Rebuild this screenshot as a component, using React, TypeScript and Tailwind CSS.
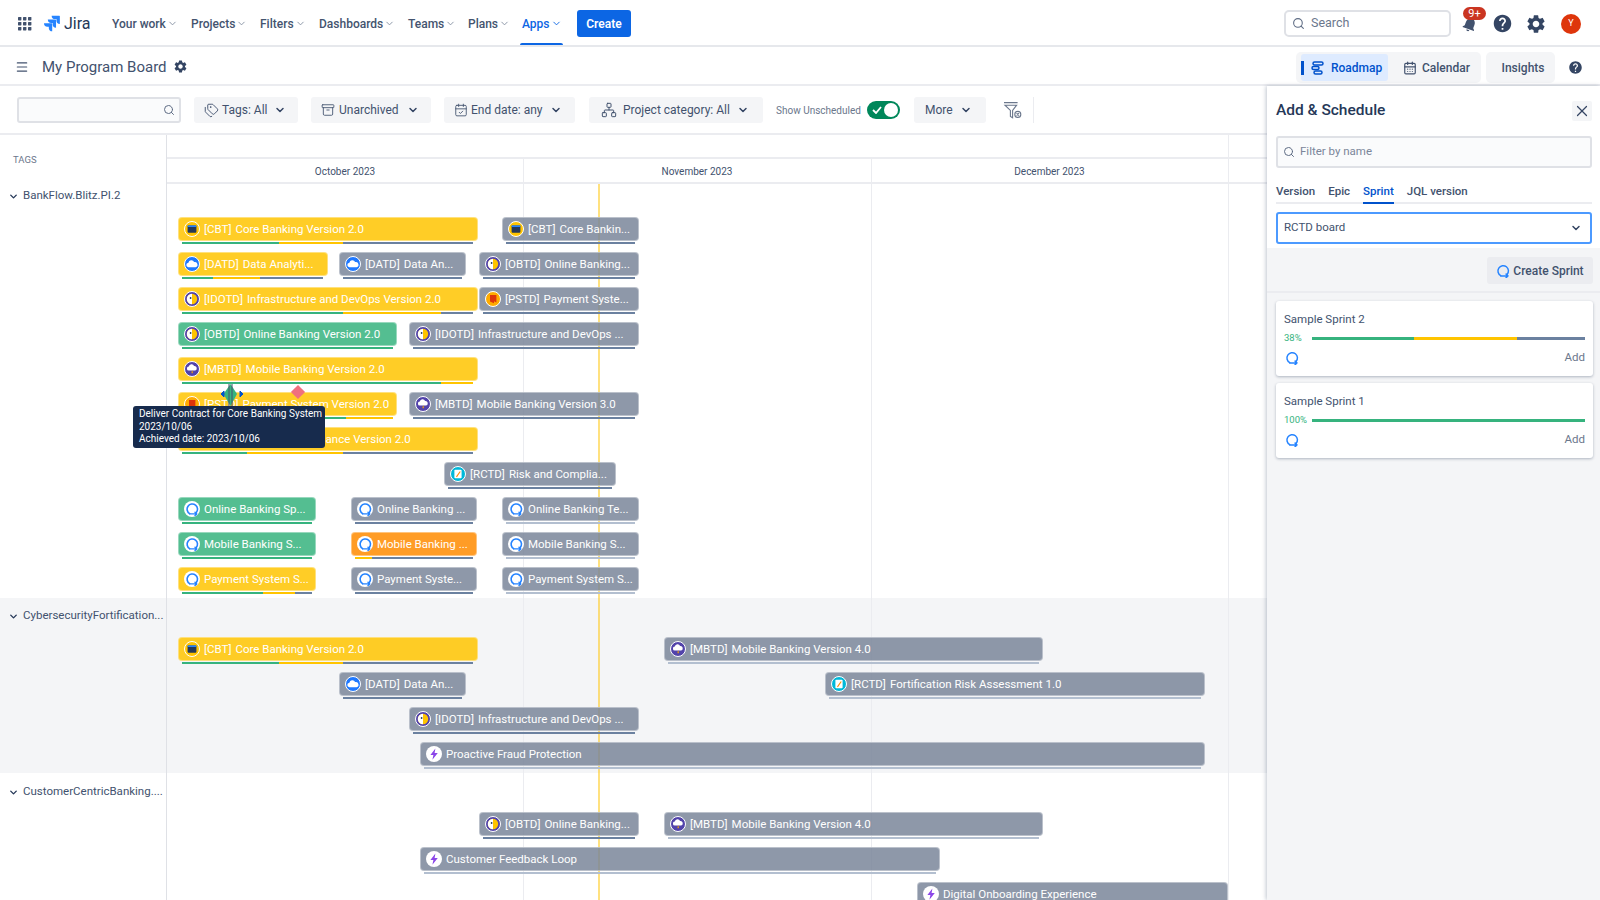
import React from "react";
import { ChevronDown, Search, Menu, Tags, Archive, CalendarCheck, Network, X, CalendarDays } from "lucide-react";
import { MdSettings, MdHelp, MdNotifications } from "react-icons/md";

const Y = "#ffc400", G = "#36b37e", D = "#6b81a0", L = "#b3bfd0";
type Seg = [string, number];
type BarT = { x: number; e: number; c: string; i: string; t: string; p: Seg[] };
const yc = "bg-[#ffc400]/85", gc = "bg-[#36b37e]/85", gy = "bg-[#7a869a]/85", oc = "bg-[#ff8b00]/85";

const b = (x: number, e: number, c: string, i: string, t: string, p: Seg[] = [[D, e - 4]]): BarT => ({ x, e, c, i, t, p });
const light = (e: number): Seg[] => [[L, e - 4]];

const cbtYellow = b(178, 478, yc, "cbt", "[CBT] \u200aCore Banking Version 2.0", [[G, 279], [Y, 343], [D, 473]]);
const dataGray = b(339, 466, gy, "dat", "[DATD] \u200aData An...");
const infraGray = b(409, 639, gy, "ido", "[IDOTD] \u200aInfrastructure and DevOps ...");
const onlineGray = b(479, 639, gy, "ido", "[OBTD] \u200aOnline Banking...");
const mob4 = b(664, 1043, gy, "mob", "[MBTD] \u200aMobile Banking Version 4.0", light(1043));

const groups: { label: string; top: string; labelTop: string; bg: string; h: string; rows: BarT[][] }[] = [
  {
    label: "BankFlow.Blitz.PI.2", top: "pt-[33px]", labelTop: "pt-[3px]", bg: "", h: "h-[414px]",
    rows: [
      [cbtYellow, b(502, 639, gy, "cbt", "[CBT] \u200aCore Bankin...")],
      [b(178, 328, yc, "dat", "[DATD] \u200aData Analyti...", [[G, 213], [Y, 260], [D, 323]]), dataGray, onlineGray],
      [b(178, 478, yc, "ido", "[IDOTD] \u200aInfrastructure and DevOps Version 2.0", [[G, 343], [Y, 441], [D, 473]]), b(479, 639, gy, "pst", "[PSTD] \u200aPayment Syste...")],
      [b(178, 397, gc, "ido", "[OBTD] \u200aOnline Banking Version 2.0", [[G, 393]]), infraGray],
      [b(178, 478, yc, "mob", "[MBTD] \u200aMobile Banking Version 2.0", [[G, 441], [Y, 473]])],
      [b(178, 397, yc, "pst", "[PSTD] \u200aPayment System Version 2.0", [[G, 346], [Y, 393]]), b(409, 639, gy, "mob", "[MBTD] \u200aMobile Banking Version 3.0")],
      [b(178, 478, yc, "rct", "[RCTD] \u200aRisk and Compliance Version 2.0", [[G, 247], [Y, 343], [D, 473]])],
      [b(444, 616, gy, "rct", "[RCTD] \u200aRisk and Complia...")],
      [b(178, 316, gc, "spr", "Online Banking Sp...", [[G, 312]]), b(351, 477, gy, "spr", "Online Banking ..."), b(502, 639, gy, "spr", "Online Banking Te...", light(639))],
      [b(178, 316, gc, "spr", "Mobile Banking S...", [[G, 312]]), b(351, 477, oc, "spr", "Mobile Banking ...", [[Y, 372], [D, 473]]), b(502, 639, gy, "spr", "Mobile Banking S...", light(639))],
      [b(178, 316, yc, "spr", "Payment System S...", [[G, 263], [Y, 295], [D, 312]]), b(351, 477, gy, "spr", "Payment Syste..."), b(502, 639, gy, "spr", "Payment System S...", light(639))],
    ],
  },
  {
    label: "CybersecurityFortification...", top: "pt-[39px]", labelTop: "pt-[9px]", bg: "bg-[#f4f5f7]", h: "h-[175px]",
    rows: [
      [cbtYellow, mob4],
      [dataGray, b(825, 1205, gy, "rct", "[RCTD] \u200aFortification Risk Assessment 1.0", light(1205))],
      [infraGray],
      [b(420, 1205, gy, "epc", "Proactive Fraud Protection", light(1205))],
    ],
  },
  {
    label: "CustomerCentricBanking....", top: "pt-[39px]", labelTop: "pt-[10px]", bg: "", h: "h-[127px]",
    rows: [
      [onlineGray, mob4],
      [b(420, 940, gy, "epc", "Customer Feedback Loop", light(940))],
      [b(917, 1228, gy, "epc", "Digital Onboarding Experience", light(1228))],
    ],
  },
];

function SprintGlyph({ s = 14 }: { s?: number }) {
  return (
    <svg width={s} height={s} viewBox="0 0 16 16" fill="none" stroke="#2684ff" strokeWidth="1.7" strokeLinecap="round" strokeLinejoin="round">
      <path d="M5.4 13.2A6 6 0 1 1 12.6 12" />
      <path d="M5.4 13.6H13.4M11.6 11.6l2 2-2 2" />
    </svg>
  );
}

function BarIcon({ k }: { k: string }) {
  const cl = "shrink-0";
  if (k === "spr")
    return (
      <svg className={cl} width="16" height="16" viewBox="0 0 16 16" fill="none">
        <circle cx="8" cy="8" r="8" fill="#fff" />
        <path d="M5.6 12.6A5.2 5.2 0 1 1 12.2 11.6" stroke="#2684ff" strokeWidth="1.6" strokeLinecap="round" />
        <path d="M5.6 12.9H12.6M11 11.2l1.8 1.7-1.8 1.6" stroke="#2684ff" strokeWidth="1.4" strokeLinecap="round" strokeLinejoin="round" />
      </svg>
    );
  if (k === "epc")
    return (
      <svg className={cl} width="16" height="16" viewBox="0 0 16 16">
        <circle cx="8" cy="8" r="8" fill="#fff" />
        <path d="M9.4 2.4 4.4 9h3l-1 4.8L11.8 7H8.6z" fill="#8b46e8" />
      </svg>
    );
  if (k === "cbt")
    return (
      <svg className={cl} width="16" height="16" viewBox="0 0 16 16">
        <circle cx="8" cy="8" r="7.5" fill="#ffc400" stroke="#fff" />
        <rect x="3.6" y="4.4" width="8.8" height="7.4" rx="1" fill="#253858" />
        <rect x="3.6" y="4.4" width="8.8" height="1.6" fill="#2684ff" />
      </svg>
    );
  if (k === "dat")
    return (
      <svg className={cl} width="16" height="16" viewBox="0 0 16 16">
        <circle cx="8" cy="8" r="7.5" fill="#1f78ff" stroke="#fff" />
        <path d="M4.6 11.2a2.2 2.2 0 0 1-.2-4.4 3 3 0 0 1 5.7-.7 2.6 2.6 0 0 1 1.5 5.1z" fill="#fff" />
      </svg>
    );
  if (k === "ido")
    return (
      <svg className={cl} width="16" height="16" viewBox="0 0 16 16">
        <circle cx="8" cy="8" r="7.5" fill="#5243aa" stroke="#fff" />
        <circle cx="8" cy="8" r="5.2" fill="#ffc400" />
        <path d="M8 2.800a5.200 5.200 0 0 0 0 10.400z" fill="#fff" />
        <circle cx="6.6" cy="7" r="0.9" fill="#253858" />
      </svg>
    );
  if (k === "mob")
    return (
      <svg className={cl} width="16" height="16" viewBox="0 0 16 16">
        <circle cx="8" cy="8" r="7.5" fill="#5243aa" stroke="#fff" />
        <path d="M5 9.6a2 2 0 0 1-.2-4 2.8 2.8 0 0 1 5.3-.6 2.4 2.4 0 0 1 1.2 4.6z" fill="#fff" />
        <path d="M8.4 9.4 7 11.6h1.2l-.6 1.6 1.8-2.4H8.2l.6-1.4z" fill="#ffab00" />
      </svg>
    );
  if (k === "pst")
    return (
      <svg className={cl} width="16" height="16" viewBox="0 0 16 16">
        <circle cx="8" cy="8" r="7.5" fill="#ffab00" stroke="#fff" />
        <path d="M5 4h6.4v7.6L9 10.2v2L5 10.4z" fill="#de350b" />
      </svg>
    );
  return (
    <svg className={cl} width="16" height="16" viewBox="0 0 16 16">
      <circle cx="8" cy="8" r="7.500" fill="#00b8d9" stroke="#fff" />
      <rect x="4.4" y="3.8" width="7.2" height="8.4" rx="0.8" fill="#fff" />
      <path d="M6 10.6 9.8 5.2l.9.6-3.8 5.4z" fill="#ff8b00" />
    </svg>
  );
}

function Bar({ d }: { d: BarT }) {
  const left = d.x - 167;
  const width = d.e - d.x;
  let prev = d.x + 4;
  return (
    <div className="absolute top-0 z-20" style={{ left, width }}>
      <div className={`h-[24px] rounded-[4px] flex items-center pl-[5px] gap-[4px] overflow-hidden border border-white/40 ${d.c}`}>
        <BarIcon k={d.i} />
        <span className="text-white text-[11.5px] whitespace-pre leading-none pt-[1px]">{d.t}</span>
      </div>
      <div className="flex h-[2px] mt-[1px] mx-[4px]">
        {d.p.map(([c, e], i) => {
          const w = e - prev;
          prev = e;
          return <div key={i} style={{ width: w, background: c }} />;
        })}
      </div>
    </div>
  );
}

function NavItem({ t, active, w }: { t: string; active?: boolean; w: string }) {
  return (
    <div className={`relative h-full flex items-center ${w} text-[12px] font-medium ${active ? "text-[#0c66e4]" : "text-[#44546f]"}`}>
      <span>{t}</span>
      <ChevronDown size={11} strokeWidth={2} className={`ml-[1px] ${active ? "text-[#0c66e4]" : "text-[#8590a2]"}`} />
      {active && <div className="absolute left-[-2px] right-[14px] bottom-0 h-[2px] bg-[#0c66e4] rounded-t" />}
    </div>
  );
}

function FilterBtn({ w, gap, pl, tl, icon, t }: { w: string; gap: string; pl: string; tl: string; icon: React.ReactNode; t: string }) {
  return (
    <div className={`h-[26px] ${w} ${pl} rounded-[3px] bg-[#f4f5f7] flex items-center text-[12px] text-[#42526e] shrink-0`}>
      {icon}
      <span className={`${tl} whitespace-nowrap`}>{t}</span>
      <ChevronDown size={12} strokeWidth={3} className={`${gap} text-[#344563]`} />
    </div>
  );
}

function SprintCard({ name, pct, segs }: { name: string; pct: string; segs: React.ReactNode }) {
  return (
    <div className="h-[75px] ml-[9px] mr-[7px] bg-white rounded-[3px] shadow-[0_1px_3px_rgba(9,30,66,0.3)] px-[8px] pt-[9px]">
      <div className="text-[11.5px] leading-[18px] text-[#42526e]">{name}</div>
      <div className="flex items-center mt-[4px] h-[12px]">
        <span className="w-[28px] text-[9.5px] text-[#36b37e] leading-none">{pct}</span>
        <div className="flex flex-1 h-[3px]">{segs}</div>
      </div>
      <div className="flex items-center justify-between mt-[5px] pl-[1px]">
        <SprintGlyph s={14} />
        <span className="text-[11.5px] text-[#6b778c]">Add</span>
      </div>
    </div>
  );
}

export default function App() {
  return (
    <div className="w-[1600px] h-[900px] overflow-hidden bg-white flex flex-col font-['Roboto',sans-serif] text-[#42526e]">
      {/* top nav */}
      <div className="h-[47px] shrink-0 flex items-center border-b-[2px] border-[#e6e8ec] pl-[18px] pr-[19px] pt-[2px]">
        <svg width="14" height="14" viewBox="0 0 14 14" fill="#42526e" className="shrink-0">
          {[0, 5, 10].map((x) => [0, 5, 10].map((y) => <rect key={`${x}${y}`} x={x} y={y} width="3.4" height="3.4" rx="0.6" />))}
        </svg>
        <svg width="17" height="17" viewBox="0 0 24 24" className="ml-[11px] shrink-0" fill="#2684ff">
          <path d="M23 1H12.2a4.8 4.8 0 0 0 4.8 4.8h2V7.8a4.8 4.8 0 0 0 4.8 4.8V1.8A.8.8 0 0 0 23 1z" />
          <path d="M17.6 6.4H6.8a4.8 4.8 0 0 0 4.8 4.8h2v2a4.8 4.800 0 0 0 4.8 4.8V7.2a.8.8 0 0 0-.8-.8z" />
          <path d="M12.2 11.8H1.4a4.8 4.8 0 0 0 4.8 4.8h2v2a4.8 4.8 0 0 0 4.8 4.4V12.6a.8.8 0 0 0-.8-.8z" />
        </svg>
        <span className="ml-[4px] w-[45px] text-[16px] text-[#253858] leading-none">Jira</span>
        <div className="flex h-full items-center ml-[3px]">
          <NavItem t="Your work" w="w-[79px]" />
          <NavItem t="Projects" w="w-[69px]" />
          <NavItem t="Filters" w="w-[59px]" />
          <NavItem t="Dashboards" w="w-[89px]" />
          <NavItem t="Teams" w="w-[60px]" />
          <NavItem t="Plans" w="w-[54px]" />
          <NavItem t="Apps" active w="w-[55px]" />
        </div>
        <div className="h-[27px] w-[54px] rounded-[3px] bg-[#0c66e4] text-white text-[12px] font-semibold flex items-center justify-center">Create</div>
        <div className="flex-1" />
        <div className="h-[27px] w-[167px] rounded-[5px] border-[2px] border-[#dfe1e6] flex items-center pl-[6px] text-[12.500px] text-[#6b778c]">
          <Search size={13} strokeWidth={2} className="text-[#5e6c84]" />
          <span className="ml-[6px]">Search</span>
        </div>
        <div className="relative ml-[7px] w-[24px] h-[24px] flex items-center justify-center">
          <MdNotifications size={18} className="text-[#42526e] rotate-[20deg]" />
          <div className="absolute top-[-5px] left-[5px] h-[13px] w-[23px] rounded-full bg-[#ca3521] text-white text-[11px] leading-[13px] text-center">9+</div>
        </div>
        <MdHelp size={21} className="ml-[10px] text-[#344563]" />
        <MdSettings size={22} className="ml-[12px] text-[#344563]" />
        <div className="ml-[14px] w-[20px] h-[20px] rounded-full bg-[#de350b] text-white text-[9px] flex items-center justify-center">Y</div>
      </div>

      {/* sub bar */}
      <div className="h-[39px] shrink-0 flex items-center border-b-[2px] border-[#ebecf0] pl-[15px] pt-[2px]">
        <Menu size={14} strokeWidth={2} className="text-[#42526e]" />
        <span className="ml-[13px] pt-[1px] text-[15px] text-[#42526e]">My Program Board</span>
        <MdSettings size={15} className="ml-[6px] text-[#344563]" />
        <div className="flex-1" />
        <div className="mt-[2px] h-[31px] w-[185px] rounded-[5px] bg-[#f4f5f7] flex items-center pl-[5px]">
          <div className="h-[27px] w-[87px] rounded-[3px] bg-[#deebff] flex items-center text-[12px] font-medium text-[#0052cc]">
            <div className="h-[14px] w-[3px] bg-[#0052cc]" />
            <svg width="14" height="14" viewBox="0 0 14 14" fill="none" stroke="#0052cc" strokeWidth="1.5" className="ml-[7px]">
              <rect x="2" y="1" width="10" height="3" rx="1.5" />
              <rect x="1" y="5.5" width="7" height="3" rx="1.5" />
              <rect x="3" y="10" width="8" height="3" rx="1.5" />
            </svg>
            <span className="ml-[6px]">Roadmap</span>
          </div>
          <CalendarDays size={14} strokeWidth={2} className="ml-[15px] text-[#42526e]" />
          <span className="ml-[5px] text-[12px] font-medium text-[#42526e]">Calendar</span>
        </div>
        <div className="mt-[2px] ml-[5px] h-[31px] w-[69px] rounded-[5px] bg-[#f4f5f7] flex items-center justify-center pl-[5px] text-[12px] font-medium text-[#42526e]">Insights</div>
        <MdHelp size={15} className="mt-[2px] ml-[13px] mr-[17px] text-[#344563]" />
      </div>

      {/* main */}
      <div className="flex-1 flex min-h-0">
        <div className="w-[1267px] shrink-0 flex flex-col min-h-0">
          {/* filters */}
          <div className="h-[49px] shrink-0 border-b-[2px] border-[#ebecf0] flex items-center pl-[17px] pt-[1px]">
            <div className="w-[164px] h-[26px] shrink-0 rounded-[3px] border-[2px] border-[#dfe1e6] bg-[#fafbfc] flex items-center justify-end pr-[4px]">
              <Search size={12} strokeWidth={2} className="text-[#5e6c84]" />
            </div>
            <div className="w-[13px] shrink-0" />
            <FilterBtn w="w-[104px]" pl="pl-[10px]" tl="ml-[3px]" gap="ml-[6px]" icon={<Tags size={15} strokeWidth={1.5} />} t="Tags: All" />
            <div className="w-[13px] shrink-0" />
            <FilterBtn w="w-[120px]" pl="pl-[10px]" tl="ml-[4px]" gap="ml-[8px]" icon={<Archive size={14} strokeWidth={1.5} />} t="Unarchived" />
            <div className="w-[13px] shrink-0" />
            <FilterBtn w="w-[131px]" pl="pl-[10px]" tl="ml-[3px]" gap="ml-[7px]" icon={<CalendarCheck size={14} strokeWidth={1.5} />} t="End date: any" />
            <div className="w-[14px] shrink-0" />
            <FilterBtn w="w-[174px]" pl="pl-[12px]" tl="ml-[6px]" gap="ml-[7px]" icon={<Network size={16} strokeWidth={1.5} />} t="Project category: All" />
            <span className="ml-[13px] w-[91px] text-[10px] text-[#6b778c] whitespace-nowrap">Show Unscheduled</span>
            <div className="w-[33px] h-[18px] rounded-full bg-[#00875a] relative flex items-center pl-[5px] shrink-0">
              <svg width="10" height="8" viewBox="0 0 10 8" fill="none" stroke="#fff" strokeWidth="1.8"><path d="M1 4l3 3 5-6" /></svg>
              <div className="absolute right-[2px] top-[2px] w-[14px] h-[14px] rounded-full bg-white" />
            </div>
            <div className="ml-[14px] w-[72px] h-[26px] shrink-0 rounded-[3px] bg-[#f4f5f7] flex items-center pl-[11px] text-[12px]">
              More
              <ChevronDown size={12} strokeWidth={3} className="ml-[7px] text-[#344563]" />
            </div>
            <svg width="19" height="19" viewBox="0 0 19 19" fill="none" stroke="#6b778c" strokeWidth="1.1" className="ml-[17px] shrink-0">
              <path d="M1 1.6h13.6M2 4.2h11.6L9.6 9.4v7.4l-2.2-1.4v-6z" />
              <circle cx="14.8" cy="13.4" r="3" />
              <path d="M13.6 12.2l2.4 2.4M16 12.2l-2.4 2.4" />
            </svg>
            <div className="ml-[11px] h-[26px] w-[1px] bg-[#ebecf0]" />
          </div>

          {/* timeline */}
          <div className="relative flex-1 min-h-0 overflow-hidden">
            <div className="absolute z-10 left-[1228px] top-0 bottom-0 w-[1px] bg-[#ebecf0]" />
            <div className="absolute z-10 left-[523px] top-[24px] bottom-0 w-[1px] bg-[#ebecf0]" />
            <div className="absolute z-10 left-[871px] top-[24px] bottom-0 w-[1px] bg-[#ebecf0]" />
            <div className="absolute z-10 left-[598px] top-[49px] bottom-0 w-[2px] bg-[#ffc400]/50" />

            {/* header */}
            <div className="flex h-[49px]">
              <div className="w-[167px] shrink-0 border-r border-[#dfe1e6] flex items-center pl-[13px] pt-[2px] text-[9.5px] text-[#6b778c]">TAGS</div>
              <div className="flex-1 flex flex-col">
                <div className="h-[24px] border-b-[2px] border-[#ebecf0]" />
                <div className="flex-1 border-b-[2px] border-[#ebecf0] relative flex items-center pt-[1px] text-[10px] text-[#42526e]">
                  <span className="w-[356px] text-center">October 2023</span>
                  <span className="w-[348px] text-center">November 2023</span>
                  <span className="w-[357px] text-center">December 2023</span>
                </div>
              </div>
            </div>

            {/* groups */}
            {groups.map((g) => (
              <div key={g.label} className={`flex ${g.h} ${g.bg}`}>
                <div className={`w-[167px] shrink-0 border-r border-[#dfe1e6] ${g.labelTop}`}>
                  <div className="flex items-center pl-[8px] h-[18px]">
                    <ChevronDown size={11} strokeWidth={3} className="text-[#253858] shrink-0" />
                    <span className="ml-[4px] text-[11.5px] text-[#42526e] whitespace-nowrap">{g.label}</span>
                  </div>
                </div>
                <div className={`flex-1 ${g.top}`}>
                  {g.rows.map((r, i) => (
                    <div key={i} className="relative h-[35px]">
                      {r.map((d) => <Bar key={d.x + d.t} d={d} />)}
                    </div>
                  ))}
                </div>
              </div>
            ))}

            {/* milestones */}
            <svg className="absolute z-30 left-[219px] top-[249px]" width="26" height="22" viewBox="0 0 26 22">
              <path d="M11.5 0 18 10 11.5 22 4.500 10z" fill="#36b37e" />
              <path d="M10 0v22M13 0v22" stroke="#42526e" strokeWidth="1" />
              <path d="M2 10l3-3v6zM24 10l-3-3v6z" fill="#0052cc" stroke="#0052cc" />
            </svg>
            <div className="absolute z-30 left-[293px] top-[252px] w-[10px] h-[10px] rotate-45 bg-[#f0707e]" />

            {/* tooltip */}
            <div className="absolute z-40 left-[133px] top-[271px] w-[192px] h-[42px] rounded-[3px] bg-[#172b4d] text-white text-[10px] leading-[12.7px] px-[6px] pt-[2px] whitespace-nowrap">
              <div>Deliver Contract for Core Banking System</div>
              <div>2023/10/06</div>
              <div>Achieved date: 2023/10/06</div>
            </div>
          </div>
        </div>

        {/* right panel */}
        <div className="w-[333px] shrink-0 bg-[#f4f5f7] flex flex-col relative z-50 shadow-[-1px_0_4px_rgba(9,30,66,0.25)]">
          <div className="bg-white h-[162px] shrink-0 pl-[9px] pr-[8px]">
            <div className="flex items-center justify-between h-[50px]">
              <span className="text-[15.5px] font-medium text-[#253858]">Add &amp; Schedule</span>
              <div className="w-[20px] h-[20px] bg-[#f4f5f7] rounded-[2px] flex items-center justify-center">
                <X size={18} strokeWidth={1.6} className="text-[#344563]" />
              </div>
            </div>
            <div className="h-[32px] rounded-[3px] border-[2px] border-[#dfe1e6] bg-[#fafbfc] flex items-center pl-[5px] text-[11.5px] text-[#7a869a]">
              <Search size={12} strokeWidth={2} className="text-[#5e6c84]" />
              <span className="ml-[5px]">Filter by name</span>
            </div>
            <div className="mt-[11px] h-[25px] flex items-start border-b-[2px] border-[#ebecf0] text-[11.5px] font-medium text-[#42526e]">
              <div className="h-[25px] leading-[24px]">Version</div>
              <div className="h-[25px] leading-[24px] ml-[13px]">Epic</div>
              <div className="h-[25px] leading-[24px] ml-[13px] text-[#0052cc] border-b-[2px] border-[#0052cc]">Sprint</div>
              <div className="h-[25px] leading-[24px] ml-[13px]">JQL version</div>
            </div>
            <div className="mt-[8px] h-[32px] rounded-[3px] border-[2px] border-[#4c9aff] flex items-center justify-between pl-[6px] pr-[8px] text-[11.5px]">
              <span>RCTD board</span>
              <ChevronDown size={12} strokeWidth={3} className="text-[#344563]" />
            </div>
          </div>
          <div className="h-[45px] shrink-0 border-b-[2px] border-[#ebecf0] flex items-start justify-end pr-[7px] pt-[9px]">
            <div className="h-[27px] w-[106px] rounded-[3px] bg-[#ebecf0] flex items-center justify-center text-[12px] font-medium text-[#42526e]">
              <SprintGlyph s={14} />
              <span className="ml-[3px]">Create Sprint</span>
            </div>
          </div>
          <div className="flex flex-col gap-[7px] pt-[8px]">
            <SprintCard
              name="Sample Sprint 2"
              pct="38%"
              segs={
                <>
                  <div className="w-[102px] bg-[#36b37e]" />
                  <div className="w-[103px] bg-[#ffc400]" />
                  <div className="flex-1 bg-[#6b81a0]" />
                </>
              }
            />
            <SprintCard name="Sample Sprint 1" pct="100%" segs={<div className="flex-1 bg-[#36b37e]" />} />
          </div>
        </div>
      </div>
    </div>
  );
}
